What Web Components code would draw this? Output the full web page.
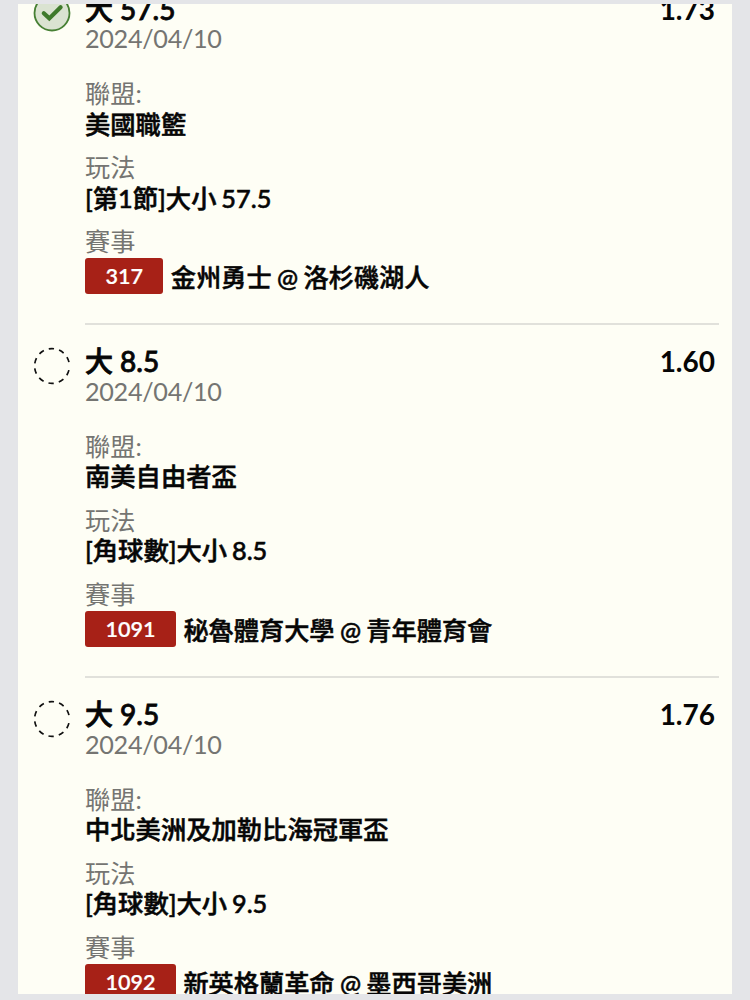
<!DOCTYPE html>
<html lang="zh-Hant">
<head>
<meta charset="utf-8">
<title>投注明細</title>
<style>
  html, body {
    height: 100%;
    margin: 0;
  }
  body {
    background: #e4e5e8;
    overflow: hidden;
  }
</style>
</head>
<body>
<bet-slip>
  <bet-leg state="won" odds="1.73" code="317">
    <span slot="pick">大 57.5</span>
    <span slot="date">2024/04/10</span>
    <span slot="league">美國職籃</span>
    <span slot="market">[第1節]大小 57.5</span>
    <span slot="match">金州勇士 @ 洛杉磯湖人</span>
  </bet-leg>
  <bet-leg state="open" odds="1.60" code="1091">
    <span slot="pick">大 8.5</span>
    <span slot="date">2024/04/10</span>
    <span slot="league">南美自由者盃</span>
    <span slot="market">[角球數]大小 8.5</span>
    <span slot="match">秘魯體育大學 @ 青年體育會</span>
  </bet-leg>
  <bet-leg state="open" odds="1.76" code="1092">
    <span slot="pick">大 9.5</span>
    <span slot="date">2024/04/10</span>
    <span slot="league">中北美洲及加勒比海冠軍盃</span>
    <span slot="market">[角球數]大小 9.5</span>
    <span slot="match">新英格蘭革命 @ 墨西哥美洲</span>
  </bet-leg>
</bet-slip>

<script>
class BetSlip extends HTMLElement {
  constructor() {
    super();

    this.attachShadow({ mode: "open" });

    this.shadowRoot.innerHTML = `
        <style>
          :host {
            display: block;
            box-sizing: border-box;
            height: 100vh;
            padding: 4px 18px 6px;
            font-family: Lato, "Noto Sans CJK TC", sans-serif;
            font-size: 25.2px;
            color: #060606;
          }

          .card {
            height: 100%;
            overflow: hidden;
            background: #fefef5;
          }

          /* the list is scrolled a little past its first row */
          .list {
            display: flex;
            flex-direction: column;
            margin-top: -31.5px;
          }
        </style>
        <div class="card">
          <div class="list"><slot></slot></div>
        </div>
      `;
  }
}

class StateIcon extends HTMLElement {
  constructor() {
    super();

    this.attachShadow({ mode: "open" });
  }

  connectedCallback() {
    const won = this.getAttribute("state") === "won";

    this.shadowRoot.innerHTML = `
        <style>
          :host {
            display: block;
            width: 38px;
            height: 38px;
          }

          svg {
            display: block;
          }
        </style>
        <svg width="38" height="38" viewBox="0 0 38 38" fill="none">
          ${won
            ? `<circle cx="19" cy="19" r="17.5" fill="#dae3d1" stroke="#478034" stroke-width="1.8"/>
               <path d="M10.8 19.2L16.3 24.4L27.6 13.2" stroke="#3f7a2c" stroke-width="4.2" stroke-linecap="round"/>`
            : `<circle cx="19" cy="19" r="17.4" stroke="#111" stroke-width="1.7" pathLength="360" stroke-dasharray="18 17" stroke-dashoffset="-14"/>`}
        </svg>
      `;
  }
}

class BetLeg extends HTMLElement {
  constructor() {
    super();

    this.attachShadow({ mode: "open" });
  }

  connectedCallback() {
    this.shadowRoot.innerHTML = `
        <style>
          :host {
            display: flex;
            flex: none;
            box-sizing: border-box;
            height: 352.8px;
            padding: 0 13px 0 15px;
          }

          state-icon {
            flex: none;
            margin: 21.5px 14px 0 0;
          }

          .body {
            flex: 1;
            box-sizing: border-box;
            padding-top: 19px;
            border-bottom: 2px solid #e1e1db;
          }

          :host(:last-child) .body {
            border-bottom: 0;
          }

          .head {
            display: flex;
            justify-content: space-between;
            height: 32.5px;
            padding-right: 4px;
            line-height: 34px;
            font-size: 28px;
            font-weight: 500;
            -webkit-text-stroke: 0.8px;
          }

          .odds {
            font-weight: 700;
            -webkit-text-stroke: 0;
          }

          .date, .label {
            height: 30.5px;
            line-height: 30.5px;
            color: #757572;
          }

          .date {
            margin-bottom: 23.5px;
            letter-spacing: -0.3px;
            line-height: 29.5px;
          }

          .value {
            height: 30.5px;
            margin-bottom: 13px;
            line-height: 30.5px;
            font-size: 25.3px;
            font-weight: 500;
            word-spacing: -1.5px;
            -webkit-text-stroke: 0.55px;
          }

          .match {
            display: flex;
            align-items: center;
            gap: 7.5px;
            height: 36px;
            margin-top: 1.5px;
            font-weight: 500;
            word-spacing: -1px;
            white-space: nowrap;
            -webkit-text-stroke: 0.5px;
          }

          .code {
            box-sizing: border-box;
            height: 36px;
            padding: 0 20.4px;
            border-radius: 3px;
            background: #a72117;
            color: #fff;
            font-size: 21.6px;
            font-weight: 600;
            line-height: 37px;
            -webkit-text-stroke: 0.2px;
          }
        </style>
        <state-icon state="${this.getAttribute("state")}"></state-icon>
        <div class="body">
          <div class="head">
            <slot name="pick"></slot>
            <span class="odds">${this.getAttribute("odds")}</span>
          </div>
          <div class="date"><slot name="date"></slot></div>
          <div class="label">聯盟:</div>
          <div class="value"><slot name="league"></slot></div>
          <div class="label">玩法</div>
          <div class="value"><slot name="market"></slot></div>
          <div class="label">賽事</div>
          <div class="match">
            <span class="code">${this.getAttribute("code")}</span>
            <slot name="match"></slot>
          </div>
        </div>
      `;
  }
}

customElements.define("bet-slip", BetSlip);
customElements.define("state-icon", StateIcon);
customElements.define("bet-leg", BetLeg);
</script>
</body>
</html>
